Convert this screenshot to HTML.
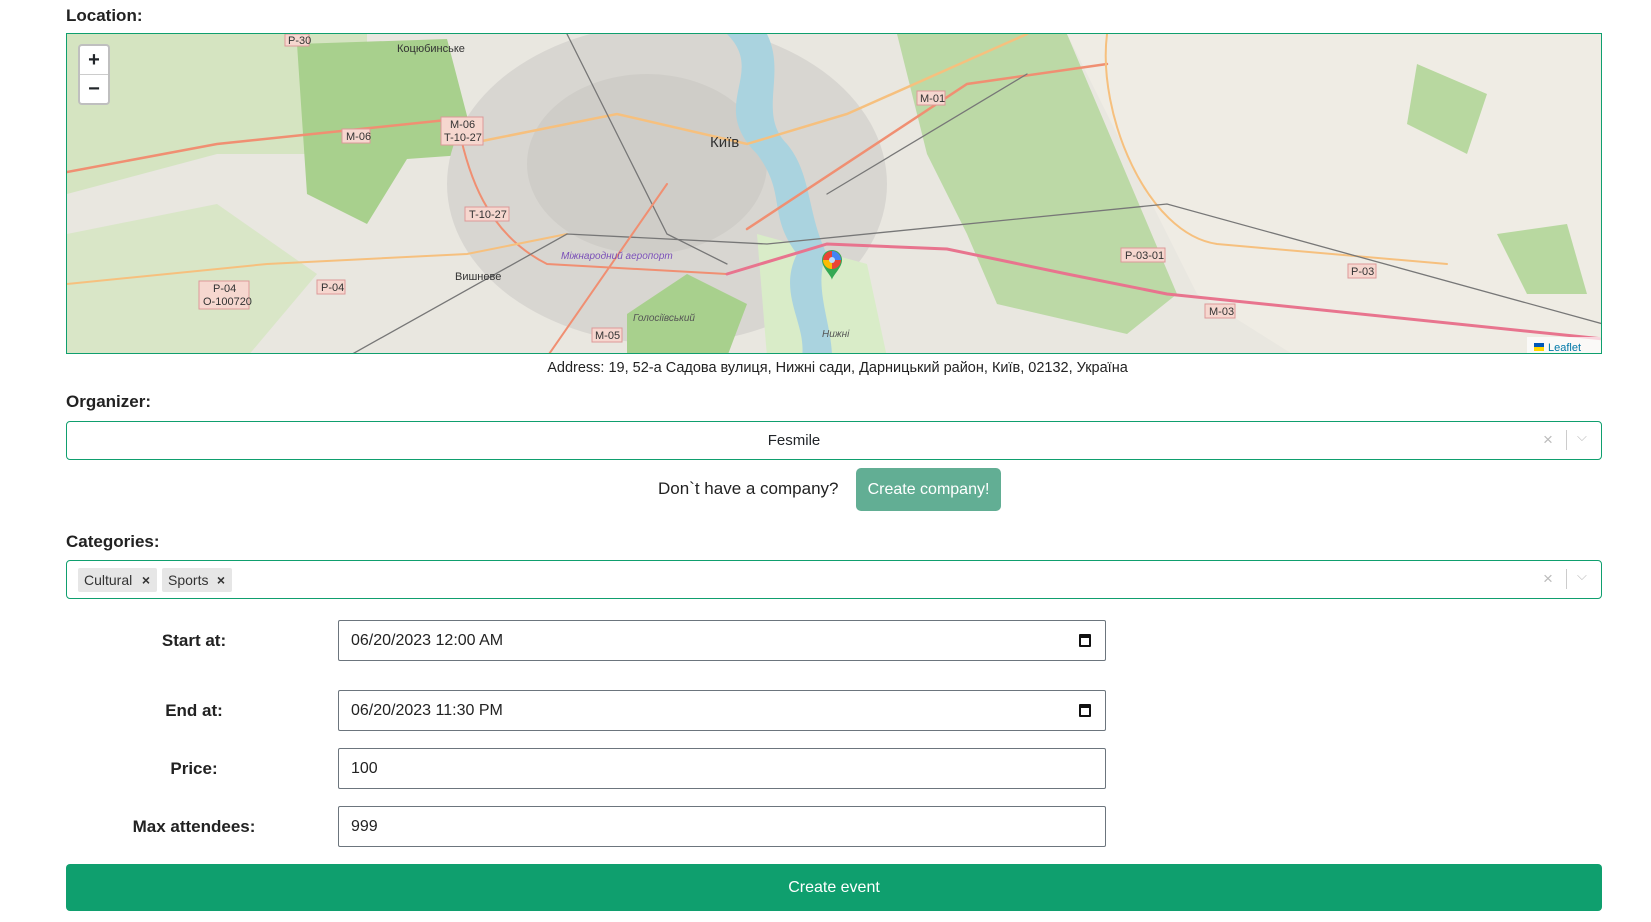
<!DOCTYPE html>
<html><head><meta charset="utf-8"><style>
*{box-sizing:border-box}
body{margin:0;width:1651px;height:922px;background:#fff;font-family:"Liberation Sans",sans-serif;color:#212529;position:relative;overflow:hidden}
.a{position:absolute}
.lbl{font-size:17px;font-weight:bold;color:#222}
.sel{position:absolute;left:66px;width:1536px;border:1px solid #0f9f6e;border-radius:4px;background:#fff}
.ctl{position:absolute;right:0;top:0;bottom:0;width:70px;color:#bbb;font-size:17px}
.inp{position:absolute;left:338px;width:768px;height:41px;border:1px solid #6c757d;border-radius:2px;font-size:16px;padding-left:12px;line-height:39px;color:#222}
.fl{position:absolute;width:200px;left:94px;text-align:center;font-size:17px;font-weight:bold;color:#222}
.tag{position:absolute;top:7px;height:24px;background:#e6e6e6;border-radius:2px;font-size:14px;line-height:24px;padding-left:6px;color:#333}
.cal{position:absolute;right:14px;top:13px;width:12px;height:13px;border:2px solid #111;border-top-width:4px;border-radius:1px}
</style></head><body>
<div class="a lbl" style="left:66px;top:6px">Location:</div>
<div class="a" style="left:66px;top:33px;width:1536px;height:321px;border:1px solid #0f9f6e;overflow:hidden;background:#e9e7e0">
<svg width="1536" height="321" viewBox="0 0 1536 321">
<rect width="1536" height="321" fill="#e9e7e0"/>
<path d="M0 0H300V120H150L0 160Z" fill="#cfe3b9" opacity=".8"/>
<path d="M230 10L380 5L410 120L340 125L300 190L240 160Z" fill="#a8d08d"/>
<path d="M0 200L150 170L250 240L180 323H0Z" fill="#d4e6c0" opacity=".8"/>
<ellipse cx="600" cy="150" rx="220" ry="160" fill="#d8d6d1"/>
<ellipse cx="580" cy="130" rx="120" ry="90" fill="#cfcdc8"/>
<path d="M830 0H1000L1110 260L1060 300L930 270L900 200L860 120Z" fill="#bcd9a6"/>
<path d="M1000 0H1536V323H1230L1130 260Z" fill="#efece4"/>
<path d="M1350 30L1420 60L1400 120L1340 90Z" fill="#b8d8a0"/>
<path d="M1430 200L1500 190L1520 260L1460 260Z" fill="#b8d8a0"/>
<path d="M560 280L620 240L680 270L660 323H560Z" fill="#a8d08d"/>
<path d="M690 200L800 230L820 323H700Z" fill="#d9ecc8"/>
<path d="M660 0C700 40 640 70 690 120C720 160 700 180 730 220C710 260 740 290 735 323H765C765 290 745 250 760 220C740 180 745 140 720 110C690 80 720 40 700 0Z" fill="#aad3df"/>
<g fill="none" stroke-linecap="round">
<path d="M0 138L150 110L389 85" stroke="#f08f72" stroke-width="2.5"/>
<path d="M390 85C400 140 420 200 480 230L660 240" stroke="#f08f72" stroke-width="2"/>
<path d="M660 240L760 210L880 215L1000 240L1100 260L1536 305" stroke="#e8748e" stroke-width="3"/>
<path d="M680 195L900 50L1040 30" stroke="#f08f72" stroke-width="2.5"/>
<path d="M400 110L550 80L680 110L780 80L960 0" stroke="#f6c07e" stroke-width="2.5"/>
<path d="M0 250L200 230L400 220L500 200" stroke="#f6c07e" stroke-width="2"/>
<path d="M1040 0C1030 80 1080 200 1150 210L1380 230" stroke="#f6c07e" stroke-width="2"/>
<path d="M280 323L500 200L700 210L1100 170L1536 290" stroke="#777" stroke-width="1.3"/>
<path d="M500 0L560 120L600 200L660 230" stroke="#777" stroke-width="1.3"/>
<path d="M760 160L960 40" stroke="#777" stroke-width="1.3"/>
<path d="M480 323L600 150" stroke="#f08f72" stroke-width="2"/>
</g>
<g font-size="11" font-family="Liberation Sans" fill="#333">
<rect x="218" y="0" width="24" height="12" fill="#f6d7cf" stroke="#d99"/><text x="221" y="10">P-30</text>
<text x="330" y="18">Коцюбинське</text>
<rect x="275" y="95" width="28" height="14" fill="#f6d7cf" stroke="#d99"/><text x="279" y="106">M-06</text>
<rect x="374" y="83" width="42" height="28" fill="#f6d7cf" stroke="#d99"/><text x="383" y="94">M-06</text><text x="377" y="107">T-10-27</text>
<rect x="398" y="173" width="44" height="14" fill="#f6d7cf" stroke="#d99"/><text x="402" y="184">T-10-27</text>
<rect x="850" y="57" width="28" height="14" fill="#f6d7cf" stroke="#d99"/><text x="853" y="68">M-01</text>
<text x="643" y="113" font-size="15">Київ</text>
<text x="388" y="246">Вишневе</text>
<rect x="132" y="247" width="50" height="28" fill="#f6d7cf" stroke="#d99"/><text x="146" y="258">P-04</text><text x="136" y="271">O-100720</text>
<rect x="250" y="246" width="28" height="14" fill="#f6d7cf" stroke="#d99"/><text x="254" y="257">P-04</text>
<rect x="1054" y="214" width="44" height="14" fill="#f6d7cf" stroke="#d99"/><text x="1058" y="225">P-03-01</text>
<rect x="1281" y="230" width="28" height="14" fill="#f6d7cf" stroke="#d99"/><text x="1284" y="241">P-03</text>
<rect x="1138" y="270" width="30" height="14" fill="#f6d7cf" stroke="#d99"/><text x="1142" y="281">M-03</text>
<rect x="525" y="294" width="30" height="14" fill="#f6d7cf" stroke="#d99"/><text x="528" y="305">M-05</text>
<text x="494" y="225" fill="#7a4fb8" font-style="italic" font-size="10">Міжнародний аеропорт</text>
<text x="566" y="287" fill="#555" font-style="italic" font-size="10">Голосіївський</text>
<text x="755" y="303" fill="#555" font-style="italic" font-size="10">Нижні</text>
</g>
<path d="M755 226a10 10 0 0 1 20 0c0 8-10 16-10 20c0-4-10-12-10-20z" fill="#34a853"/>
<circle cx="765" cy="226" r="9" fill="#ea4335"/><path d="M765 217a9 9 0 0 1 9 9h-9z" fill="#4285f4"/><path d="M756 226a9 9 0 0 0 9 9v-9z" fill="#fbbc04"/><circle cx="765" cy="226" r="3" fill="#bbdefb"/>
<rect x="1460" y="303" width="76" height="18" fill="rgba(255,255,255,.7)"/>
<rect x="1467" y="309" width="10" height="4" fill="#0057b7"/><rect x="1467" y="313" width="10" height="4" fill="#ffd700"/>
<text x="1481" y="317" font-size="11" fill="#0078a8" font-family="Liberation Sans">Leaflet</text>
</svg>
<div class="a" style="left:11px;top:10px;width:32px;height:61px;background:#fff;border:2px solid rgba(0,0,0,.25);border-radius:4px;text-align:center;font:bold 20px 'Liberation Sans';line-height:28px">+<div style="border-top:1px solid #ccc">−</div></div>
</div>
<div class="a" style="left:0;width:1675px;top:360px;text-align:center;font-size:14.5px;color:#222">Address: 19, 52-а Садова вулиця, Нижні сади, Дарницький район, Київ, 02132, Україна</div>
<div class="a lbl" style="left:66px;top:392px">Organizer:</div>
<div class="sel" style="top:421px;height:39px"><div style="text-align:center;line-height:37px;font-size:15px;padding-right:80px">Fesmile</div>
<div class="ctl"><span class="a" style="left:12px;top:8px">×</span><span class="a" style="left:35px;top:8px;height:20px;border-left:1px solid #ccc"></span><span class="a" style="left:46px;top:7px;font-size:13px">⌵</span></div></div>
<div class="a" style="left:658px;top:479px;font-size:17px;color:#222">Don`t have a company?</div>
<div class="a" style="left:856px;top:468px;width:145px;height:43px;background:#62ae94;border-radius:5px;color:#fff;font-size:16px;text-align:center;line-height:43px">Create company!</div>
<div class="a lbl" style="left:66px;top:532px">Categories:</div>
<div class="sel" style="top:560px;height:39px">
<div class="tag" style="left:11px;width:79px">Cultural <b style="position:absolute;right:7px">×</b></div>
<div class="tag" style="left:95px;width:70px">Sports <b style="position:absolute;right:7px">×</b></div>
<div class="ctl"><span class="a" style="left:12px;top:8px">×</span><span class="a" style="left:35px;top:8px;height:20px;border-left:1px solid #ccc"></span><span class="a" style="left:46px;top:7px;font-size:13px">⌵</span></div></div>
<div class="fl" style="top:631px">Start at:</div>
<div class="inp" style="top:620px">06/20/2023 12:00 AM<span class="cal"></span></div>
<div class="fl" style="top:701px">End at:</div>
<div class="inp" style="top:690px">06/20/2023 11:30 PM<span class="cal"></span></div>
<div class="fl" style="top:759px">Price:</div>
<div class="inp" style="top:748px">100</div>
<div class="fl" style="top:817px">Max attendees:</div>
<div class="inp" style="top:806px">999</div>
<div class="a" style="left:66px;top:864px;width:1536px;height:47px;background:#0f9f6e;border-radius:4px;color:#fff;font-size:16px;text-align:center;line-height:47px">Create event</div>
</body></html>
